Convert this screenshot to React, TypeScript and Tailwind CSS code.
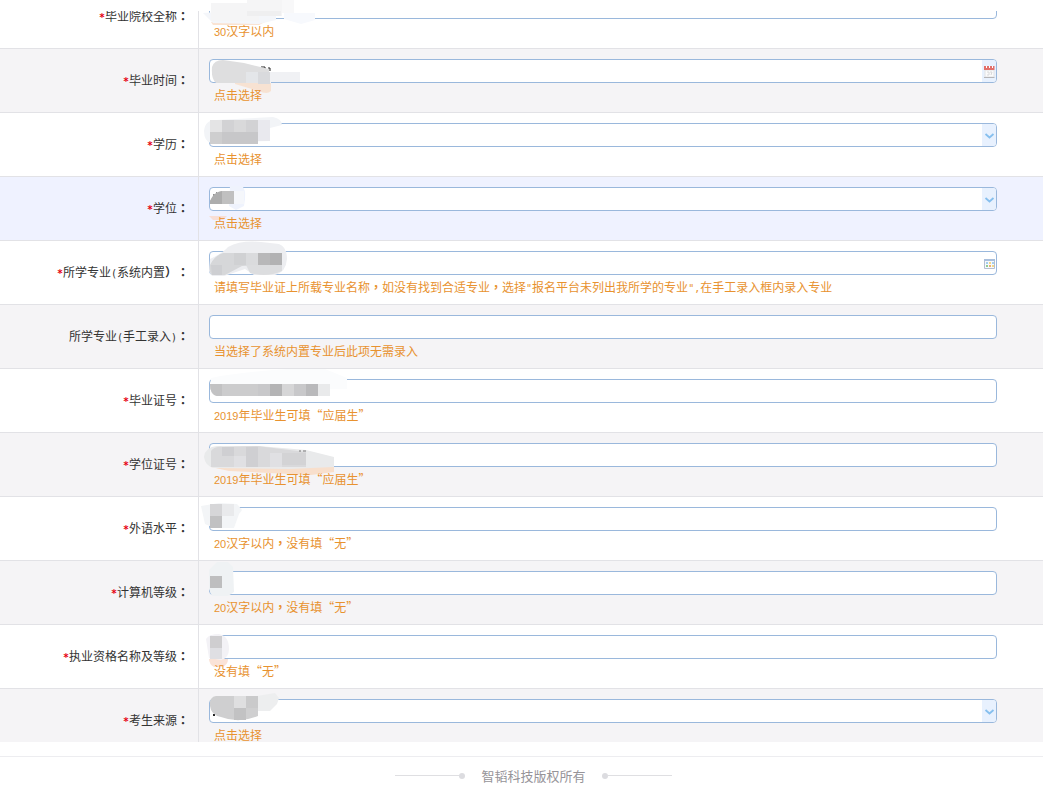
import clsx from "clsx";
import type { ReactNode } from "react";

type FieldKind = "text" | "date" | "select" | "lookup";

type Field = {
  id: string;
  label: string;
  hint: string;
  kind: FieldKind;
  required?: boolean;
  active?: boolean;
  mask?: ReactNode;
};

// Mask shapes use the value cell as their origin: 1 unit = 1px.
const fields: Field[] = [
  {
    id: "school",
    label: "毕业院校全称：",
    hint: "30汉字以内",
    kind: "text",
    required: true,
  },
  {
    id: "graduated",
    label: "毕业时间：",
    hint: "点击选择",
    kind: "date",
    required: true,
    mask: (
      <>
        <path d="M36 32 L72 32 V42 Q68 46 60 42 L36 35Z" fill="#f8ddc9" opacity="0.8" />
        <path d="M62 18h4v3M69 19h2v3" stroke="#222" fill="none" />
        <path d="M13 18 Q15 11 24 11 L45 14 L70 20 V34 L17 34 Q12 30 13 18Z" fill="#dededf" />
        <path d="M47 23h54v10H72v1H47z" fill="#f0f1f4" />
        <path d="M47 23h12v11H47z" fill="#e4e6e9" />
        <path d="M59 23h12v12H59z" fill="#d9dadd" />
      </>
    ),
  },
  {
    id: "education",
    label: "学历：",
    hint: "点击选择",
    kind: "select",
    required: true,
    mask: (
      <>
        <path d="M5 18 Q6 7 17 7 L74 4 Q83 6 83 12 L71 15 V28 L12 30 Q5 28 5 18Z" fill="#f2f4f7" />
        <path d="M11 7h12v12H11z" fill="#e4e4e5" />
        <path d="M11 19h12v12H11z" fill="#cececf" />
        <path d="M23 7h36v12H23z" fill="#d2d2d4" />
        <path d="M35 7h12v12H35z" fill="#d9d9da" />
        <path d="M23 19h36v12H23z" fill="#c7c7c9" />
        <path d="M59 7h12v21H59z" fill="#e9e9ee" />
      </>
    ),
  },
  {
    id: "degree",
    label: "学位：",
    hint: "点击选择",
    kind: "select",
    required: true,
    active: true,
    mask: (
      <>
        <path d="M31 9 L43 9 Q47 12 46 22 L45 29 L37 33 L30 29Z" fill="#eff3fd" />
        <path d="M14 18h2m1-2h1" stroke="#222" />
        <path d="M11 27 V24 Q15 15 23 14 H35 V27Z" fill="#c0c0c0" />
        <path d="M11 27 V24 Q15 15 23 14 V27Z" fill="#adadad" />
        <path d="M35 14h10v13H35z" fill="#f5f7fb" />
        <path d="M10 39h18l-4 4H14z" fill="#f8ded4" />
      </>
    ),
  },
  {
    id: "major",
    label: "所学专业(系统内置）：",
    hint: '请填写毕业证上所载专业名称，如没有找到合适专业，选择"报名平台未列出我所学的专业",在手工录入框内录入专业',
    kind: "lookup",
    required: true,
    mask: (
      <>
        <path d="M11 18 Q24 12 29 6 Q42 -1 62 1 L80 3 Q88 6 88 18 Q87 31 76 34 L55 34 L46 28 L25 35 H13 L10 30Z" fill="#edeef1" />
        <path d="M11 24 Q15 15 24 12 H59 V24 L43 25 L26 34 H13 Q10 32 11 24Z" fill="#d6d7d9" />
        <path d="M12 24h11v10H13z" fill="#cecfd2" />
        <path d="M35 12h12v12H35z" fill="#d0d1d3" />
        <path d="M47 12h12v12H47z" fill="#dadbdd" />
        <path d="M59 12h12v12H59z" fill="#b8b8b9" />
        <path d="M71 12h12v12H71z" fill="#b2b2b3" />
        <path d="M47 24h36v6Q68 37 51 32z" fill="#dcdddf" />
      </>
    ),
  },
  {
    id: "major-manual",
    label: "所学专业(手工录入)：",
    hint: "当选择了系统内置专业后此项无需录入",
    kind: "text",
  },
  {
    id: "diploma-no",
    label: "毕业证号：",
    hint: "2019年毕业生可填“应届生”",
    kind: "text",
    required: true,
    mask: (
      <>
        <path d="M12 9 Q40 3 90 0 L126 0 L148 9 V20 L12 22Z" fill="#fbfcfd" />
        <path d="M11 15h119v12H18Q11 26 11 15z" fill="#cccccd" />
        <path d="M11 15h12v12H18Q11 25 11 15z" fill="#c2c2c3" />
        <path d="M59 15h12v12H59zM95 15h12v12H95z" fill="#c8c8ca" />
        <path d="M71 15h12v12H71z" fill="#b4b4b5" />
        <path d="M83 15h12v12H83z" fill="#d6d6d7" />
        <path d="M107 15h12v12h-12z" fill="#b9b9bb" />
        <path d="M119 15h12v12h-12z" fill="#e9eaeb" />
      </>
    ),
  },
  {
    id: "degree-no",
    label: "学位证号：",
    hint: "2019年毕业生可填“应届生”",
    kind: "text",
    required: true,
    mask: (
      <>
        <path d="M12 34 H135 V39 L112 42 L70 40 L30 38Z" fill="#f8dfcc" />
        <path d="M5 24 Q6 14 18 13 L60 13 L107 17 L135 24 V34 L90 36 L15 35 Q6 33 5 24Z" fill="#e9eaeb" />
        <path d="M12 18 Q16 13 24 14 L58 13 L107 19 V34 H12Z" fill="#d9d9db" />
        <path d="M23 14h12v9H23zM47 14h12v20H47z" fill="#cfcfd2" />
        <path d="M35 23h12v11H35zM71 20h12v14H71z" fill="#e0e0e3" />
        <path d="M83 20h24v12H83z" fill="#d3d3d5" />
        <path d="M100 18h2m2 0h3" stroke="#777" />
      </>
    ),
  },
  {
    id: "language",
    label: "外语水平：",
    hint: "20汉字以内，没有填“无”",
    kind: "text",
    required: true,
    mask: (
      <>
        <path d="M2 9 L20 6 L38 7 L43 13 L40 17 L35 31 H15 L6 27Z" fill="#f3f5f7" />
        <path d="M11 7h12v12H11z" fill="#d6d6d8" />
        <path d="M11 19h12v12H11z" fill="#c1c1c2" />
        <path d="M23 7h12v12H23z" fill="#e9eaec" />
      </>
    ),
  },
  {
    id: "computer",
    label: "计算机等级：",
    hint: "20汉字以内，没有填“无”",
    kind: "text",
    required: true,
    mask: (
      <>
        <path d="M10 9 L18 1 H29 L34 6 L35 31 L29 35 H13 L10 28Z" fill="#eff2f4" />
        <path d="M11 15h12v12H11z" fill="#bebebf" />
      </>
    ),
  },
  {
    id: "licence",
    label: "执业资格名称及等级：",
    hint: "没有填“无”",
    kind: "text",
    required: true,
    mask: (
      <>
        <path d="M10 34h19q0 6-6 8h-8q-5-3-5-8z" fill="#fae3d7" />
        <path d="M7 14 Q10 9 20 9 Q30 11 30 24 Q30 33 22 35 L10 33Z" fill="#f3f2f6" />
        <path d="M11 11h12v12H11z" fill="#cfced0" />
        <path d="M11 23h12v11H11z" fill="#dfdfe3" />
      </>
    ),
  },
  {
    id: "origin",
    label: "考生来源：",
    hint: "点击选择",
    kind: "select",
    required: true,
    mask: (
      <>
        <path d="M58 7 L76 4 L80 9 L78 15 L71 22 H52Z" fill="#edeeef" />
        <path d="M14 22h2m-2 4h2" stroke="#222" strokeWidth="2" />
        <path d="M11 17 Q10 8 17 7 H59 V27 Q40 35 22 28 Q12 26 11 17Z" fill="#cfcfd0" />
        <path d="M35 7h12v12H35z" fill="#dfdfe0" />
        <path d="M35 19h12v12H35z" fill="#c2c2c3" />
        <path d="M47 7h12v12H47z" fill="#cacacb" />
      </>
    ),
  },
];

// Latin characters take half a cell, commas and colons sit in the middle of one.
function MixedText({ text }: { text: string }) {
  return text.split(/(\d+|[ -/]+|[，：）])/).map((part, index) => {
    if (/^\d+$/.test(part)) {
      return (
        <span key={index} className="font-['Liberation_Sans',sans-serif] text-[11px] leading-none">
          {part}
        </span>
      );
    }

    if (/^[ -/]+$/.test(part)) {
      return (
        <span key={index} className="font-['DejaVu_Sans_Mono',monospace] text-[10px] leading-none">
          {part}
        </span>
      );
    }

    if (/^[，：）]$/.test(part)) {
      return (
        <span
          key={index}
          lang="zh-TW"
          className="font-['Noto_Sans_CJK_TC',sans-serif] leading-none font-bold [text-spacing-trim:space-all]"
        >
          {part}
        </span>
      );
    }

    return part;
  });
}

function ChevronIcon() {
  return (
    <svg viewBox="0 0 14 22" className="h-[22px] w-3.5" aria-hidden="true">
      <path d="M3.5 10 L7.5 13.5 L11.5 10" fill="none" stroke="#86bfee" strokeWidth="1.8" />
    </svg>
  );
}

function CalendarIcon() {
  return (
    <svg viewBox="0 0 14 22" className="h-[22px] w-3.5" aria-hidden="true">
      <path d="M3 10h9v7H3z" fill="#fbfbfb" stroke="#e2e2e4" />
      <path d="M2 6h10.5v4H2z" fill="#e2706b" />
      <path d="M4 6h1v2H4zM7 6h1v2H7zM10 6h1v2h-1z" fill="#fff" />
      <path d="M5 12h2v3H5M8 12h2l-1 3" fill="none" stroke="#d8d8da" />
      <path d="M2 17.5h10.5" stroke="#b5b5b8" />
    </svg>
  );
}

function GridIcon() {
  return (
    <svg viewBox="0 0 14 22" className="h-[22px] w-3.5" aria-hidden="true">
      <path d="M2.5 7.5h10v9h-10z" fill="#f6f9fd" stroke="#b5bfd0" />
      <path d="M2 7h11v2H2z" fill="#a9bfdc" />
      <path d="M4 10h2v2H4zM10 10h2v2h-2z" fill="#a6cfec" />
      <path d="M7 10h2v2H7zM10 13h2v2h-2z" fill="#f1d989" />
      <path d="M4 13h2v2H4z" fill="#8fcb90" />
      <path d="M7 13h2v2H7z" fill="#f0b070" />
    </svg>
  );
}

function Control({ id, kind }: { id: string; kind: FieldKind }) {
  const inputClass = "h-full min-w-0 flex-1 appearance-none bg-transparent px-1 text-xs outline-none";

  return (
    <div className="flex h-6 overflow-hidden rounded border border-[#9ab8dc] bg-white">
      {kind === "select" ? (
        <select id={id} className={inputClass} />
      ) : (
        <input id={id} type="text" className={inputClass} />
      )}
      {kind === "select" && (
        <span className="pointer-events-none bg-[#e8f1fe]">
          <ChevronIcon />
        </span>
      )}
      {kind === "date" && (
        <button type="button" aria-label="选择日期" className="bg-[#e8f1fe]">
          <CalendarIcon />
        </button>
      )}
      {kind === "lookup" && (
        <button type="button" aria-label="选择专业">
          <GridIcon />
        </button>
      )}
    </div>
  );
}

function FieldRow({ field, striped }: { field: Field; striped: boolean }) {
  return (
    <div
      className={clsx(
        "flex border-b border-[#e2e2e6]",
        field.active ? "bg-[#eff2ff]" : striped ? "bg-[#f5f4f6]" : "bg-white",
      )}
    >
      <label
        htmlFor={field.id}
        className="flex w-[199px] shrink-0 items-center justify-end border-r border-[#e2e2e6] pr-[9px] pb-0.5 text-[#333]"
      >
        <span className="whitespace-nowrap">
          {field.required && (
            <span className="font-['DejaVu_Sans_Mono',monospace] text-[10px] leading-none font-bold text-[#e60012]">
              *
            </span>
          )}
          <MixedText text={field.label} />
        </span>
      </label>
      <div className="relative min-w-0 flex-1 pt-2.5 pr-[46px] pb-[5px] pl-2.5">
        <Control id={field.id} kind={field.kind} />
        <p className="relative z-10 h-6 pl-[5px] leading-6 text-[#e8922f]">
          <MixedText text={field.hint} />
        </p>
        {field.mask && (
          <svg
            viewBox="0 0 160 63"
            className="pointer-events-none absolute top-0 left-0 h-[63px] w-40 overflow-visible"
            aria-hidden="true"
          >
            {field.mask}
          </svg>
        )}
      </div>
    </div>
  );
}

export default function App() {
  return (
    <div className="relative flex h-screen flex-col bg-white pt-[11px] font-['Noto_Sans_CJK_SC',sans-serif] text-xs">
      <form className="min-h-0 flex-1 overflow-hidden">
        <div className="-mt-[26px]">
          {fields.map((field, index) => (
            <FieldRow key={field.id} field={field} striped={index % 2 === 1} />
          ))}
        </div>
      </form>
      <svg
        viewBox="0 0 120 30"
        className="pointer-events-none absolute top-0 left-[199px] h-[30px] w-[120px]"
        aria-hidden="true"
      >
        <path d="M12 22h54l-6 3H14z" fill="#fae3d2" />
        <path d="M4 13 L50 10 L77 13 V20 L60 24 L14 23Z" fill="#f4f6fa" />
        <path d="M85 13h31v7l-14 4-17-5z" fill="#f7f9fd" />
        <path d="M12 3h36V0h35v16H60v5H12z" fill="#f5f5f6" />
        <path d="M48 11h34v5H48z" fill="#efeff0" />
        <path d="M83 0h12v13H83z" fill="#f8f8f9" />
      </svg>
      <footer className="mt-3.5 flex h-[30px] items-center justify-center gap-4 border-t border-[#ededf0] pt-2 pl-6 text-[13px] text-[#969499]">
        <span className="flex items-center">
          <span className="h-px w-16 bg-[#dfdfe2]" />
          <span className="size-1.5 rounded-full bg-[#dcdce0]" />
        </span>
        <span>智韬科技版权所有</span>
        <span className="flex items-center">
          <span className="size-1.5 rounded-full bg-[#dcdce0]" />
          <span className="h-px w-16 bg-[#dfdfe2]" />
        </span>
      </footer>
    </div>
  );
}
